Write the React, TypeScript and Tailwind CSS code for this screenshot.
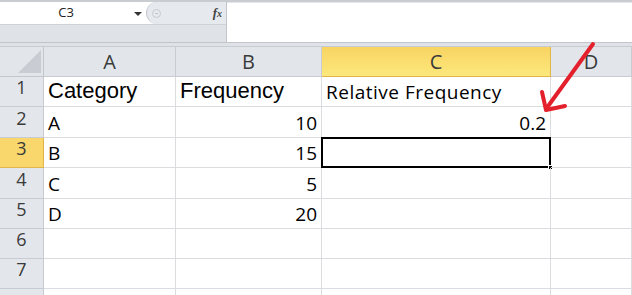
const COLS = [
  { key: 'A', width: 'w-[132px]' },
  { key: 'B', width: 'w-[146px]' },
  { key: 'C', width: 'w-[229px]' },
  { key: 'D', width: 'flex-1' },
]

const ROWS = [
  { n: 1, h: 'h-[30px]', cells: ['Category', 'Frequency', 'Relative Frequency', ''] },
  { n: 2, h: 'h-[31px]', cells: ['A', '10', '0.2', ''] },
  { n: 3, h: 'h-[30px]', cells: ['B', '15', '', ''] },
  { n: 4, h: 'h-[31px]', cells: ['C', '5', '', ''] },
  { n: 5, h: 'h-[30px]', cells: ['D', '20', '', ''] },
  { n: 6, h: 'h-[30px]', cells: ['', '', '', ''] },
  { n: 7, h: 'h-[30px]', cells: ['', '', '', ''] },
  { n: 8, h: 'h-[30px]', cells: ['', '', '', ''] },
]

const calibri = { fontFamily: '"Open Sans", "Noto Sans", sans-serif' }

function FormulaBar() {
  return (
    <div className="h-[46px] bg-[#dfe3e8] flex flex-col">
      <div className="h-[2px] bg-[#c9cdd2]" />
      <div className="flex h-[41px] border-b border-[#c2c6cc]">
        <div className="w-[227px] flex flex-col border-r border-[#c2c6cc]">
          <div className="h-[23px] flex bg-white border-b border-[#cfd3d8]">
            <div className="w-[146px] flex items-center relative">
              <span className="flex-1 text-center text-[13px] text-[#222] pr-[14px]" style={calibri}>C3</span>
              <span className="absolute left-[134px] top-[10px] w-0 h-0 border-l-[4px] border-r-[4px] border-t-[4px] border-l-transparent border-r-transparent border-t-[#333]" />
            </div>
            <div className="flex-1 bg-[#e6e9ed] rounded-l-full border-l border-[#c4c8ce] flex items-center justify-between pl-[5px] pr-[4px]">
              <span className="w-[9px] h-[9px] rounded-full border border-[#c7cbd0] flex items-center justify-center">
                <span className="w-[3px] h-px bg-[#c0c4c9]" />
              </span>
              <span className="italic text-[13px] text-[#444] font-bold" style={{ fontFamily: '"Liberation Serif", serif' }}>
                f<span className="text-[10px]">x</span>
              </span>
            </div>
          </div>
          <div className="flex-1" />
        </div>
        <div className="flex-1 bg-white border-t border-[#e3e6ea]" />
      </div>
    </div>
  )
}

function HeaderRow() {
  return (
    <div className="flex h-[31px] border-t border-[#c8ccd1]">
      <div className="w-[44px] h-full bg-[#e2e6eb] border-r border-b border-[#c3c7cd] relative">
        <svg className="absolute left-[18px] top-[3px]" width="23" height="23" viewBox="0 0 23 23">
          <polygon points="0,23 23,0 23,23" fill="#c9cdd3" />
        </svg>
      </div>
      {COLS.map(c => (
        <div
          key={c.key}
          className={`${c.width} h-full flex items-center justify-center text-[20px] border-r border-b ${
            c.key === 'C'
              ? 'bg-gradient-to-b from-[#f8d462] to-[#fde87c] border-[#e0b64b] text-[#3a3a3a]'
              : 'bg-[#e2e6eb] border-[#c8ccd2] text-[#3a3a3a]'
          }`}
          style={calibri}
        >
          {c.key}
        </div>
      ))}
    </div>
  )
}

export default function App() {
  return (
    <div className="w-[632px] h-[295px] overflow-hidden bg-white relative" style={calibri}>
      <FormulaBar />
      <HeaderRow />
      {ROWS.map(r => (
        <div key={r.n} className={`flex ${r.h}`}>
          <div
            className={`w-[44px] h-full flex items-end justify-center pb-[5px] text-[18px] border-r border-b ${
              r.n === 3
                ? 'bg-[#f9d76c] border-[#e0b64b] text-[#3a3a3a]'
                : 'bg-[#e3e6ea] border-[#c8ccd2] text-[#3a3a3a]'
            }`}
          >
            {r.n < 8 ? r.n : ''}
          </div>
          {COLS.map((c, i) => {
            const value = r.cells[i]
            const isNum = value !== '' && !isNaN(Number(value))
            const isTitle = r.n === 1 && i < 2
            const selected = r.n === 3 && c.key === 'C'
            return (
              <div
                key={c.key}
                className={`${c.width} h-full flex items-end px-[4px] pb-[4px] border-r border-b border-[#dadcdf] text-black relative ${
                  isNum ? 'justify-end' : 'justify-start'
                } ${isTitle ? 'text-[22px] pb-[3px]' : 'text-[19px]'} ${
                  r.n === 1 && c.key === 'C' ? 'tracking-[0.5px]' : ''
                }`}
                style={isTitle ? { fontFamily: '"Liberation Sans", Arial, sans-serif' } : undefined}
              >
                {value && <span className="leading-none">{value}</span>}
                {selected && (
                  <>
                    <span className="absolute -left-px -top-px -right-px -bottom-px border-2 border-black" />
                    <span className="absolute -right-[3px] -bottom-[3px] w-[5px] h-[5px] bg-black border border-white" />
                  </>
                )}
              </div>
            )
          })}
        </div>
      ))}
      <svg className="absolute left-0 top-0 pointer-events-none" width="632" height="295">
        <line x1="593" y1="44" x2="546" y2="109" stroke="#e3202c" strokeWidth="4" strokeLinecap="round" />
        <polyline points="542,92 546,110 565,106" fill="none" stroke="#e3202c" strokeWidth="4" strokeLinecap="round" strokeLinejoin="round" />
      </svg>
    </div>
  )
}
